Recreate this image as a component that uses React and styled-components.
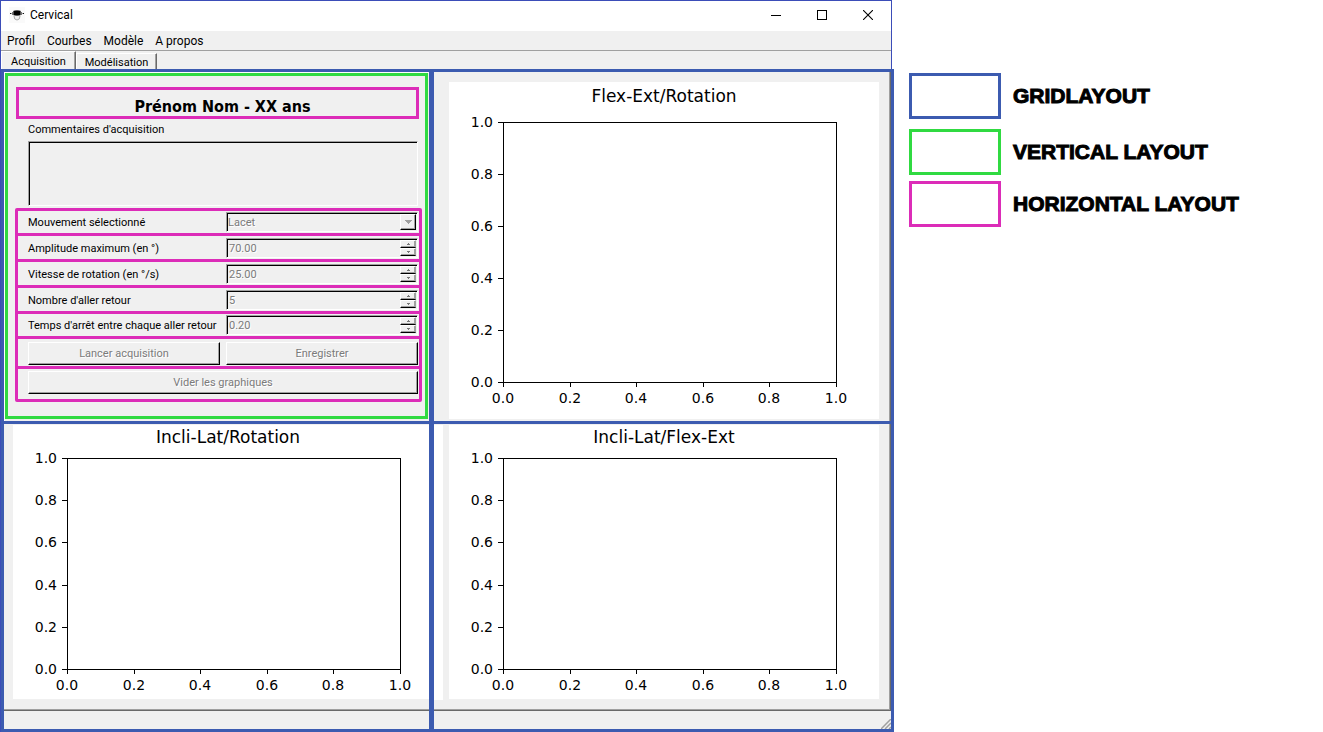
import React from "react";
import styled, { createGlobalStyle, css } from "styled-components";

const color = {
  face: "#f0f0f0",
  shade: "#a0a0a0",
  dark: "#696969",
  disabled: "#7b7b7b",
  frame: "#3b4db8",
  grid: "#3c5bb0",
  vertical: "#30da41",
  horizontal: "#dc2cb8",
};

const uiFont = 'Roboto, "Open Sans", sans-serif';
const headingFont = '"DejaVu Sans Condensed", "DejaVu Sans", sans-serif';

const GlobalStyle = createGlobalStyle`
  * { box-sizing: border-box; }
  body { margin: 0; background: #fff; color: #000; font-family: ${uiFont}; font-size: 11px; }
  button, input, select, textarea { font: inherit; margin: 0; }
`;

const sunken = css`
  border: 1px solid;
  border-color: ${color.shade} #fff #fff ${color.shade};
  box-shadow: inset 1px 1px 0 #000;
`;

const raised = css`
  border: 1px solid;
  border-color: #fff #000 #000 #fff;
  box-shadow: inset -1px -1px 0 ${color.shade};
  background: ${color.face};
`;

const Page = styled.div`
  display: flex;
  align-items: stretch;
  min-height: 100vh;
`;

const Window = styled.main`
  flex: 1 1 0;
  min-width: 700px;
  display: flex;
  flex-direction: column;
`;

const Chrome = styled.header`
  margin-right: 2px;
  border: 1px solid ${color.frame};
  border-bottom: 0;
  background: ${color.face};
`;

const TitleBar = styled.div`
  height: 30px;
  display: flex;
  align-items: center;
  padding: 0 0 2px 8px;
  background: #fff;
  font-size: 12px;
`;

const WindowTitle = styled.span`
  flex: 1;
  padding-left: 5px;
`;

const WindowButton = styled.button`
  width: 46px;
  height: 28px;
  padding: 0;
  border: 0;
  background: none;
  display: grid;
  place-items: center;
`;

const MenuBar = styled.nav`
  height: 20px;
  display: flex;
  align-items: center;
  gap: 12px;
  padding-left: 6px;
  border-bottom: 1px solid ${color.shade};
  font-size: 12px;
`;

const MenuItem = styled.button`
  border: 0;
  padding: 0;
  background: none;
  line-height: 18px;
`;

const TabBar = styled.div`
  height: 18px;
  display: flex;
  align-items: flex-end;
`;

const Tab = styled.button`
  width: ${(p) => (p.$active ? 75 : 81)}px;
  height: ${(p) => (p.$active ? 18 : 16)}px;
  padding: 2px 0 0;
  border: 0;
  border-top: 1px solid #fff;
  border-left: 1px solid #fff;
  border-right: 1px solid ${color.dark};
  box-shadow: inset -1px 0 0 ${color.shade};
  background: ${color.face};
  line-height: 13px;
`;

const GridLayout = styled.section`
  flex: 1;
  display: grid;
  grid-template-columns: minmax(0, 425fr) minmax(0, 457fr);
  grid-template-rows: auto 1fr;
  gap: 3px 5px;
  padding: 3px;
  border-left: 1px solid ${color.frame};
  background: ${color.grid};
`;

const Cell = styled.div`
  display: flex;
  flex-direction: column;
  background: ${color.face};
`;

const FormCell = styled(Cell)`
  padding: 0 1px 2px 0;
  border-top: 1px solid #fff;
  border-left: 1px solid #fff;
`;

const VerticalLayout = styled.form`
  flex: 1;
  display: flex;
  flex-direction: column;
  padding: 11px 3px 14px 7px;
  border: 3px solid ${color.vertical};
`;

const Patient = styled.h1`
  height: 32px;
  margin: 0 3px 0 1px;
  padding-left: 10px;
  border: 3px solid ${color.horizontal};
  font-family: ${headingFont};
  font-size: 16px;
  line-height: 34px;
  text-align: center;
  white-space: nowrap;
`;

const CommentLabel = styled.label`
  padding-left: 13px;
  line-height: 22px;
`;

const Comments = styled.textarea`
  ${sunken}
  flex: 1;
  min-height: 65px;
  margin: 0 4px 2px 13px;
  background: ${color.face};
  resize: none;
`;

const HorizontalRows = styled.div`
  display: flex;
  flex-direction: column;
  gap: 3px;
  border: 3px solid ${color.horizontal};
  border-radius: 2px;
  background: ${color.horizontal};
`;

const Row = styled.div`
  display: grid;
  grid-template-columns: ${(p) => (p.$single ? "minmax(0, 1fr)" : "minmax(0, 1fr) minmax(0, 1fr)")};
  column-gap: 6px;
  align-items: end;
  height: ${(p) => p.$height}px;
  padding: 0 1px ${(p) => p.$bottom || 1}px 10px;
  background: ${color.face};
`;

const RowLabel = styled.label`
  line-height: 18px;
  white-space: nowrap;
`;

const Field = styled.div`
  ${sunken}
  display: flex;
  height: 20px;
  padding: 1px;
`;

const embossed = css`
  color: ${color.disabled};
  text-shadow: 1px 1px 0 #fff;
  opacity: 1;
`;

const NumberInput = styled.input`
  ${embossed}
  flex: 1;
  min-width: 0;
  padding: 1px 0 0 1px;
  border: 0;
  background: none;
  appearance: textfield;
  &::-webkit-inner-spin-button { appearance: none; margin: 0; }
`;

const Select = styled.select`
  ${embossed}
  flex: 1;
  min-width: 0;
  padding: 1px 0 0 0;
  border: 0;
  background: none;
  appearance: none;
`;

const Steps = styled.div`
  width: 16px;
  display: grid;
  grid-template-rows: 1fr 1fr;
`;

const StepButton = styled.button`
  ${raised}
  border-right-color: ${color.shade};
  min-height: 0;
  padding: 0;
  display: grid;
  place-items: center;
`;

const DropMark = styled.span`
  ${raised}
  width: 16px;
  display: grid;
  place-items: center;
`;

const PushButton = styled.button`
  ${raised}
  ${embossed}
  height: 23px;
  padding: 0;
`;

const PlotPane = styled.div`
  flex: 1;
  display: flex;
  align-items: flex-start;
  gap: 6px;
  padding: ${(p) => p.$pad};
  ${(p) => p.$rightEdge && css`
    border-right: 1px solid ${color.dark};
    box-shadow: inset -1px 0 0 ${color.shade};
  `}
  ${(p) => p.$bottomEdge && css`
    border-bottom: 1px solid ${color.dark};
    box-shadow: inset ${p.$rightEdge ? "-1px" : "0"} -1px 0 ${color.shade};
  `}
`;

const Canvas = styled.svg`
  display: block;
  flex: 1;
  min-width: 0;
  background: #fff;
  font-family: "DejaVu Sans", sans-serif;
`;

const CanvasEdge = styled.div`
  width: 9px;
  align-self: stretch;
  background: #fff;
`;

const StatusBar = styled.footer`
  height: 18px;
  display: flex;
  align-items: flex-end;
  justify-content: flex-end;
`;

const Legend = styled.aside`
  flex: 0 0 429px;
  padding: 73px 15px 0 15px;
`;

const LegendItem = styled.div`
  display: flex;
  align-items: center;
  gap: 12px;
  margin-bottom: ${(p) => p.$after}px;
  font: bold 21px "Liberation Sans", Arial, sans-serif;
  -webkit-text-stroke: 1px #000;
  white-space: nowrap;
`;

const Swatch = styled.span`
  width: 92px;
  height: 46px;
  border: 3px solid ${(p) => p.$color};
`;

const ticks = [0, 0.2, 0.4, 0.6, 0.8, 1];

function Plot({ title, width, height, top, bottom, titleY }) {
  const left = 54;
  const right = 387;
  return (
    <Canvas
      height={height}
      viewBox={`0 0 ${width} ${height}`}
      preserveAspectRatio="xMidYMid meet"
      role="img"
      aria-label={title}
    >
      <text x={215} y={titleY} fontSize="17" textAnchor="middle">{title}</text>
      <g fill="none" stroke="#000" shapeRendering="crispEdges">
        <rect x={left + 0.5} y={top + 0.5} width={right - left} height={bottom - top} />
        {ticks.map((t) => {
          const x = Math.round(left + t * (right - left)) + 0.5;
          const y = Math.round(bottom - t * (bottom - top)) + 0.5;
          return <path key={t} d={`M${x} ${bottom + 1}v4M${left} ${y}h-5`} />;
        })}
      </g>
      {ticks.map((t) => (
        <g key={t} fontSize="14">
          <text x={Math.round(left + t * (right - left))} y={bottom + 21} textAnchor="middle">
            {t.toFixed(1)}
          </text>
          <text x={left - 10} y={Math.round(bottom - t * (bottom - top)) + 5} textAnchor="end">
            {t.toFixed(1)}
          </text>
        </g>
      ))}
    </Canvas>
  );
}

function SpinRow({ id, label, value, height }) {
  return (
    <Row $height={height}>
      <RowLabel htmlFor={id}>{label}</RowLabel>
      <Field>
        <NumberInput id={id} type="number" step="any" defaultValue={value} disabled />
        <Steps>
          <StepButton type="button" disabled aria-label={`${label} : augmenter`}>
            <svg width="3" height="2" shapeRendering="crispEdges"><path d="M1 0h1v1h1v1H0V1h1z" fill="#777" /></svg>
          </StepButton>
          <StepButton type="button" disabled aria-label={`${label} : diminuer`}>
            <svg width="3" height="2" shapeRendering="crispEdges"><path d="M0 0h3v1H2v1H1V1H0z" fill="#777" /></svg>
          </StepButton>
        </Steps>
      </Field>
    </Row>
  );
}

export default function App() {
  return (
    <>
      <GlobalStyle />
      <Page>
        <Window>
          <Chrome>
            <TitleBar>
              <svg width="16" height="16" viewBox="0 0 16 16" aria-hidden="true">
                <rect width="16" height="16" fill="#fafafa" />
                <path d="M2 6.5h12" stroke="#999" />
                <rect x="1" y="6" width="1" height="1" fill="#111" />
                <rect x="14" y="6" width="1" height="1" fill="#111" />
                <rect x="3" y="5" width="2" height="3" fill="#777" />
                <rect x="11" y="5" width="2" height="3" fill="#777" />
                <path d="M5 9q0 4 3 4t3-4" fill="#eee" stroke="#aaa" />
                <path d="M4 4q4-2 8 0v4q-4 2-8 0z" fill="#555" />
                <path d="M5 4h6v4H5z" fill="#000" />
              </svg>
              <WindowTitle>Cervical</WindowTitle>
              <WindowButton type="button" aria-label="Réduire">
                <svg width="10" height="10" shapeRendering="crispEdges"><path d="M0 5.5h10" stroke="#000" /></svg>
              </WindowButton>
              <WindowButton type="button" aria-label="Agrandir">
                <svg width="10" height="10" shapeRendering="crispEdges"><rect x=".5" y=".5" width="9" height="9" fill="none" stroke="#000" /></svg>
              </WindowButton>
              <WindowButton type="button" aria-label="Fermer">
                <svg width="10" height="10"><path d="M0 0l10 10M10 0L0 10" stroke="#000" strokeWidth="1.1" /></svg>
              </WindowButton>
            </TitleBar>
            <MenuBar>
              <MenuItem type="button">Profil</MenuItem>
              <MenuItem type="button">Courbes</MenuItem>
              <MenuItem type="button">Modèle</MenuItem>
              <MenuItem type="button">A propos</MenuItem>
            </MenuBar>
            <TabBar role="tablist">
              <Tab type="button" role="tab" aria-selected="true" $active>Acquisition</Tab>
              <Tab type="button" role="tab" aria-selected="false">Modélisation</Tab>
            </TabBar>
          </Chrome>

          <GridLayout>
            <FormCell>
              <VerticalLayout>
                <Patient>Prénom Nom - XX ans</Patient>
                <CommentLabel htmlFor="comments">Commentaires d'acquisition</CommentLabel>
                <Comments id="comments" disabled />
                <HorizontalRows>
                  <Row $height={22}>
                    <RowLabel htmlFor="movement">Mouvement sélectionné</RowLabel>
                    <Field>
                      <Select id="movement" disabled>
                        <option>Lacet</option>
                      </Select>
                      <DropMark aria-hidden="true">
                        <svg width="7" height="4" shapeRendering="crispEdges"><path d="M0 0h7v1H6v1H5v1H4v1H3V3H2V2H1V1H0z" fill="#a0a0a0" /></svg>
                      </DropMark>
                    </Field>
                  </Row>
                  <SpinRow id="amplitude" label="Amplitude maximum (en °)" value="70.00" height={23} />
                  <SpinRow id="speed" label="Vitesse de rotation (en °/s)" value="25.00" height={23} />
                  <SpinRow id="count" label="Nombre d'aller retour" value="5" height={23} />
                  <SpinRow id="pause" label="Temps d'arrêt entre chaque aller retour" value="0.20" height={22} />
                  <Row $height={27}>
                    <PushButton type="button" disabled>Lancer acquisition</PushButton>
                    <PushButton type="button" disabled>Enregistrer</PushButton>
                  </Row>
                  <Row $height={30} $bottom={5} $single>
                    <PushButton type="button" disabled>Vider les graphiques</PushButton>
                  </Row>
                </HorizontalRows>
              </VerticalLayout>
            </FormCell>

            <Cell>
              <PlotPane $pad="10px 11px 2px 15px" $rightEdge>
                <Plot title="Flex-Ext/Rotation" width={430} height={337} top={40} bottom={300} titleY={20} />
              </PlotPane>
            </Cell>

            <Cell>
              <PlotPane $pad="1px 0 10px 9px" $bottomEdge>
                <Plot title="Incli-Lat/Rotation" width={416} height={274} top={33} bottom={244} titleY={18} />
              </PlotPane>
              <StatusBar />
            </Cell>

            <Cell>
              <PlotPane $pad="1px 11px 10px 0" $rightEdge $bottomEdge>
                <CanvasEdge />
                <Plot title="Incli-Lat/Flex-Ext" width={430} height={274} top={33} bottom={244} titleY={18} />
              </PlotPane>
              <StatusBar>
                <svg width="10" height="10" aria-hidden="true">
                  <path d="M0 10L10 0M4 10l6-6M8 10l2-2" stroke="#a0a0a0" strokeWidth="1.5" />
                </svg>
              </StatusBar>
            </Cell>
          </GridLayout>
        </Window>

        <Legend>
          <LegendItem $after={10}><Swatch $color={color.grid} />GRIDLAYOUT</LegendItem>
          <LegendItem $after={6}><Swatch $color={color.vertical} />VERTICAL LAYOUT</LegendItem>
          <LegendItem $after={0}><Swatch $color={color.horizontal} />HORIZONTAL LAYOUT</LegendItem>
        </Legend>
      </Page>
    </>
  );
}
